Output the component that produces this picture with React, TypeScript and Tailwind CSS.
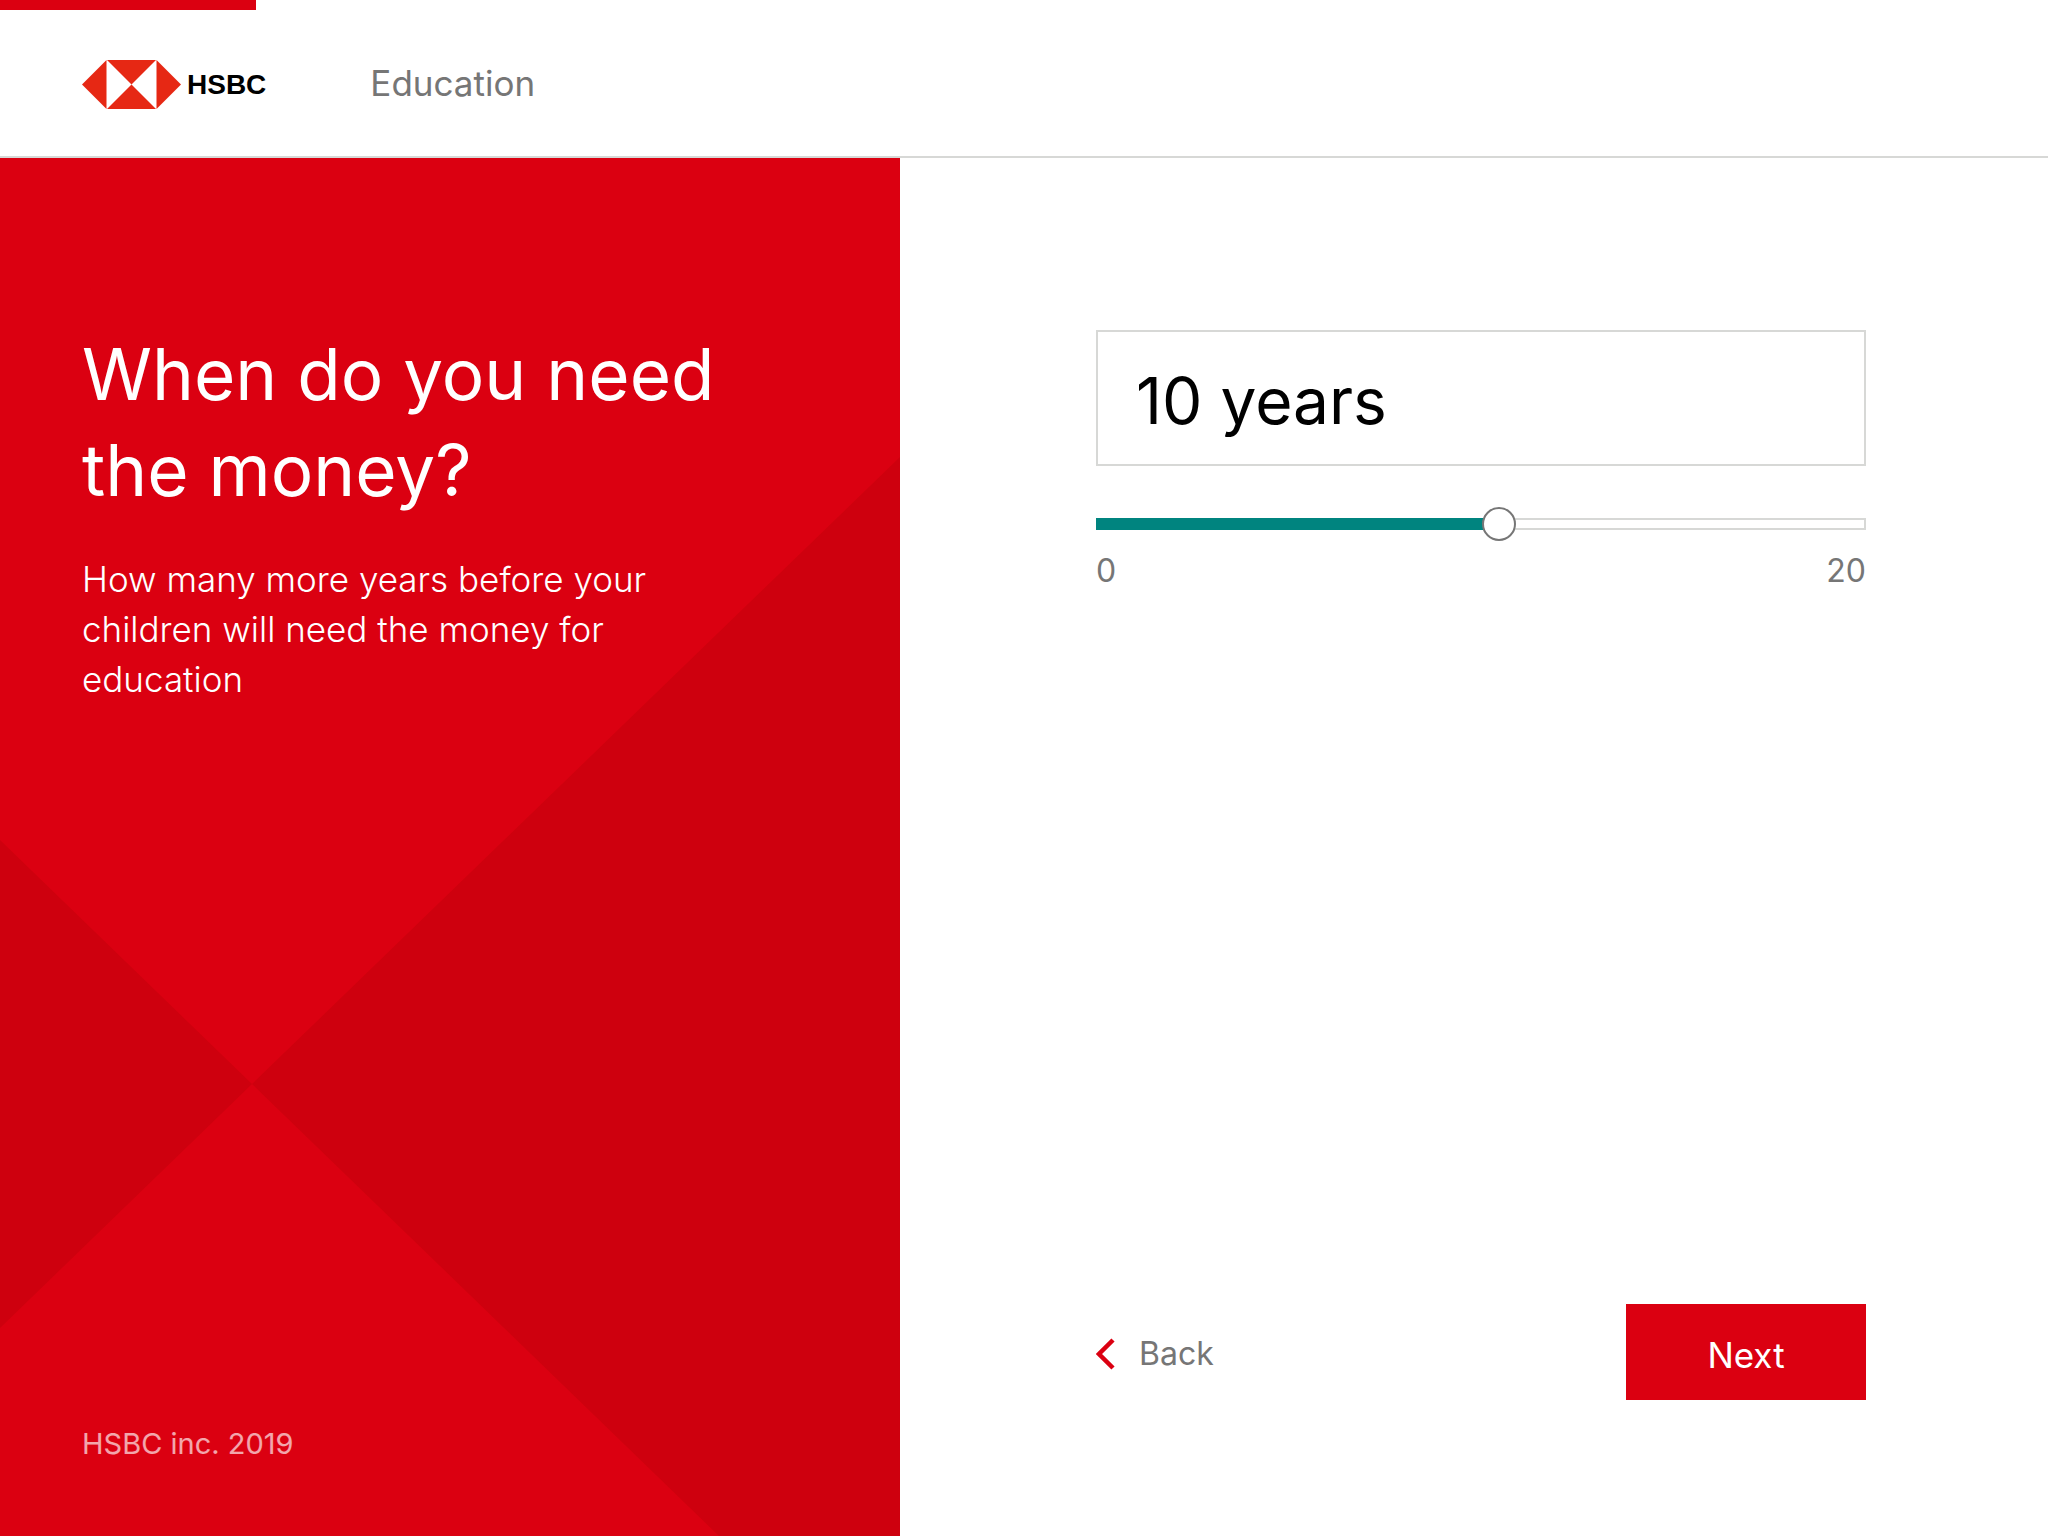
import { useState } from "react";

function HsbcLogo() {
  return (
    <a href="#" aria-label="HSBC" className="flex items-center gap-1.5">
      <svg viewBox="0 0 99 49" className="h-[49px] w-[99px]" aria-hidden="true">
        <path
          fill="#E62814"
          d="M24.5 0V49L0 24.5ZM74.5 0V49L99 24.5ZM25 0H74L49.5 24.5ZM25 49H74L49.5 24.5Z"
        />
      </svg>
      <span className="pt-0.5 font-['Liberation_Sans',sans-serif] text-[28px] leading-8 font-bold text-black">
        HSBC
      </span>
    </a>
  );
}

function Header() {
  return (
    <header className="relative flex h-[158px] items-center border-b-2 border-[#d7d8d6] bg-white px-[82px] pt-3">
      <div className="absolute top-0 left-0 h-[10px] w-1/8 bg-[#db0011]" />
      <HsbcLogo />
      <span className="ml-[104px] pb-0.5 text-[35px] leading-10 text-[#767676]">Education</span>
    </header>
  );
}

function IntroPanel() {
  return (
    <section className="relative flex flex-col justify-between bg-[#db0011] px-[82px] pt-[168px] pb-[72px] text-white">
      <svg
        viewBox="0 0 900 1378"
        preserveAspectRatio="none"
        className="absolute inset-0 h-full w-full"
        aria-hidden="true"
      >
        <path fill="#CE000E" d="M0 682L252 926L0 1170ZM900 299V1378H719L252 926Z" />
      </svg>
      <div className="relative max-w-[680px]">
        <h1 className="text-[71px] leading-[96px]">
          When do you need
          <br />
          the money?
        </h1>
        <p className="mt-9 max-w-[600px] text-[35px] leading-[50px] font-light">
          How many more years before your children will need the money for education
        </p>
      </div>
      <p className="relative text-[29px] leading-10 text-white/65">HSBC inc. 2019</p>
    </section>
  );
}

const MAX_YEARS = 20;

function YearsForm() {
  const [years, setYears] = useState(10.5);
  const filled = `calc(17px + (100% - 34px) * ${years / MAX_YEARS})`;

  return (
    <form
      className="flex flex-col bg-white pt-[172px] pr-[182px] pb-[136px] pl-[196px]"
      onSubmit={(event) => event.preventDefault()}
    >
      <input
        type="text"
        readOnly
        aria-label="Years until the money is needed"
        value={`${Math.floor(years)} years`}
        className="h-[136px] w-full border-2 border-[#d7d8d6] px-[38px] pt-1 text-[64px] leading-[80px] text-black outline-none"
      />
      <div className="relative mt-[41px] flex h-[34px] items-center">
        <div className="h-3 w-full border-2 border-[#d7d8d6]" />
        <div className="absolute left-0 h-3 bg-[#00847f]" style={{ width: filled }} />
        <input
          type="range"
          min={0}
          max={MAX_YEARS}
          step={0.5}
          value={years}
          aria-label="Years"
          onChange={(event) => setYears(Number(event.target.value))}
          className="absolute inset-0 m-0 h-[34px] w-full cursor-pointer appearance-none bg-transparent outline-none [&::-webkit-slider-thumb]:size-[34px] [&::-webkit-slider-thumb]:appearance-none [&::-webkit-slider-thumb]:rounded-full [&::-webkit-slider-thumb]:border-2 [&::-webkit-slider-thumb]:border-[#767676] [&::-webkit-slider-thumb]:bg-white"
        />
      </div>
      <div className="mt-[10px] flex justify-between text-[32px] leading-10 text-[#767676]">
        <span>0</span>
        <span>{MAX_YEARS}</span>
      </div>
      <div className="mt-auto flex items-center justify-between">
        <button type="button" className="flex items-center gap-6 pt-1 text-[32px] leading-10 text-[#767676]">
          <svg viewBox="0 0 19 32" className="h-8 w-[19px]" aria-hidden="true">
            <path d="M17 2L3 16L17 30" fill="none" stroke="#DB0011" strokeWidth="4.5" />
          </svg>
          Back
        </button>
        <button
          type="submit"
          className="h-24 w-60 bg-[#db0011] pt-1.5 text-[35px] leading-10 text-white"
        >
          Next
        </button>
      </div>
    </form>
  );
}

export default function App() {
  return (
    <div className="flex min-h-screen flex-col bg-white font-['Inter',sans-serif]">
      <Header />
      <main className="grid flex-1 grid-cols-[900fr_1148fr]">
        <IntroPanel />
        <YearsForm />
      </main>
    </div>
  );
}
